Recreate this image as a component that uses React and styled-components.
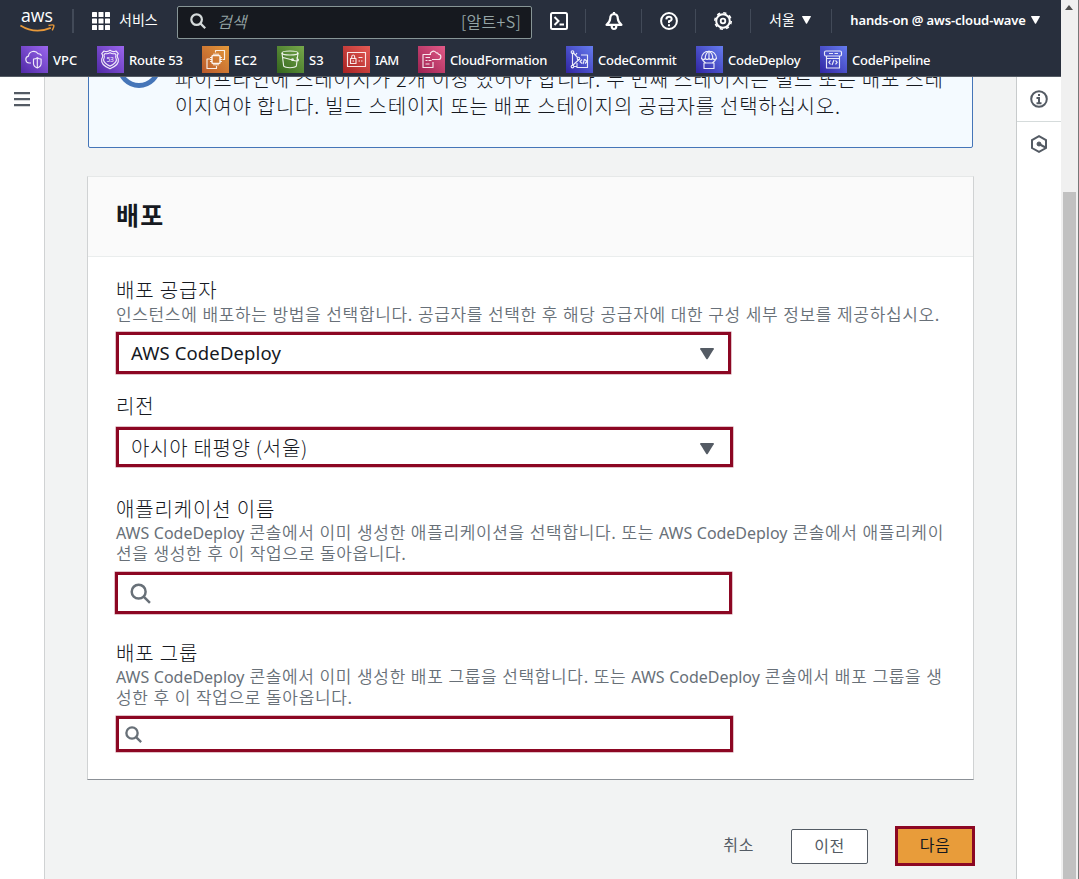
import React from "react";
import styled, { createGlobalStyle, css } from "styled-components";

const latin = `"Noto Sans", "Open Sans"`;
const korean = `"Noto Sans CJK KR"`;

const GlobalStyle = createGlobalStyle`
  * { box-sizing: border-box; }
  body { margin: 0; background: #f2f3f3; font-family: ${latin}, ${korean}, sans-serif; color: #16191f; overflow: hidden; }
  svg { display: block; flex: none; overflow: visible; }
`;

const Window = styled.div`
  display: flex;
  width: 1079px;
  height: 879px;
  overflow: hidden;
`;
const Page = styled.div`
  width: 1061px;
  height: 879px;
  display: flex;
  flex-direction: column;
`;
const Scrollbar = styled.div`
  width: 18px;
  background: #f0f0f0;
  border-right: 1px solid #777;
  display: flex;
  flex-direction: column;
  align-items: center;
`;
const ScrollArrow = styled.svg`
  margin: 5px 1px 0 0;
`;
const ScrollThumb = styled.div`
  width: 13px;
  flex: 1;
  margin-top: 182px;
  background: #c1c1c1;
`;

const Header = styled.header`
  height: 77px;
  flex: none;
  background: #282f3d;
  border-bottom: 1px solid #545b64;
  color: #fff;
`;
const TopBar = styled.div`
  height: 41px;
  display: flex;
  align-items: center;
  padding-left: 20px;
`;
const Divider = styled.i`
  width: ${(p) => p.$w || 1}px;
  height: 24px;
  background: #424a58;
  flex: none;
  margin-left: ${(p) => p.$gap}px;
`;
const Services = styled.div`
  display: flex;
  align-items: center;
  gap: 9px;
  margin-left: 18px;
  font: 400 14px/18px ${korean}, sans-serif;
  width: 85px;
  white-space: nowrap;
  span { padding-bottom: 3px; }
`;
const SearchBox = styled.div`
  width: 355px;
  height: 33px;
  margin: 3px 0 0;
  background: #16191f;
  border: 1px solid #879596;
  border-radius: 2px;
  display: flex;
  align-items: center;
  padding: 0 10px 0 12px;
  color: #95a5a6;
  font: 350 16px/29px ${korean}, sans-serif;
  > svg { margin-bottom: 2px; }
  > span, > em { padding-bottom: 2px; }
`;
const SearchHint = styled.em`
  margin-left: 11px;
  flex: 1;
`;
const Shortcut = styled.span`
  letter-spacing: 0.3px;
`;
const TopIcon = styled.span`
  width: 18px;
  margin-left: ${(p) => p.$gap}px;
  flex: none;
`;
const Menu = styled.span`
  display: flex;
  align-items: center;
  gap: ${(p) => p.$space || 7}px;
  margin-left: ${(p) => p.$gap}px;
  font: ${(p) => p.$weight || 400} ${(p) => p.$size || 14}px/18px ${latin}, ${korean}, sans-serif;
  letter-spacing: ${(p) => p.$ls || 0}px;
  padding-bottom: 1px;
  white-space: nowrap;
`;
const Favorites = styled.nav`
  height: 35px;
  display: flex;
  padding: 5px 0 0 21px;
`;
const Favorite = styled.a`
  display: flex;
  align-items: center;
  gap: 5px;
  width: ${(p) => p.$w}px;
  height: 27px;
  font: 500 13px/16px ${latin}, sans-serif;
  letter-spacing: ${(p) => p.$ls}px;
  white-space: nowrap;
`;

const Body = styled.div`
  flex: 1;
  display: flex;
  min-height: 0;
`;
const LeftRail = styled.aside`
  width: 45px;
  background: #fff;
  border-right: 1px solid #d0d2d3;
  padding: 15px 0 0 14px;
`;
const RightRail = styled.aside`
  width: 45px;
  background: #fff;
  border-left: 1px solid #c8cbcc;
`;
const RailButton = styled.div`
  height: ${(p) => (p.$line ? 45 : 43)}px;
  display: flex;
  justify-content: center;
  align-items: center;
  border-bottom: ${(p) => (p.$line ? "1px solid #d5dbdb" : "0")};
`;
const Main = styled.main`
  flex: 1;
  padding: 0 43px;
  display: flex;
  flex-direction: column;
  overflow: hidden;
`;
const Alert = styled.section`
  height: 148px;
  flex: none;
  margin-top: -77px;
  border: 1px solid #4575b8;
  border-radius: 2px;
  background: #f4faff;
  display: flex;
  padding: 43px 0 0 28px;
`;
const AlertText = styled.div`
  margin: 21px 0 0 14px;
  font: 300 20px/27px ${korean}, sans-serif;
  letter-spacing: 0.75px;
  white-space: nowrap;
`;
const Card = styled.section`
  margin: 28px 0 0 -1px;
  height: 604px;
  flex: none;
  width: 887px;
  background: #fff;
  border: 1px solid #d0d2d3;
  border-top-color: #e6e8e8;
  border-bottom-color: #8b9096;
`;
const CardHead = styled.h2`
  margin: 0;
  height: 80px;
  padding: 0 28px;
  background: #fafafa;
  border-bottom: 1px solid #eaeded;
  font: 700 25px/75px ${korean}, sans-serif;
  letter-spacing: 1.2px;
`;
const Form = styled.div`
  padding: 20px 0 0 28px;
`;
const Field = styled.div`
  height: ${(p) => p.$h}px;
`;
const Label = styled.div`
  font: 300 20px/26px ${korean}, sans-serif;
  letter-spacing: 0.86px;
  white-space: nowrap;
`;
const Description = styled.div`
  font: 350 17px/20.5px ${korean}, sans-serif;
  letter-spacing: 0.65px;
  word-spacing: 0.5px;
  color: #687078;
  white-space: nowrap;
  padding-top: ${(p) => p.$top || 0}px;
`;
const Latin = styled.span`
  font-family: ${latin}, sans-serif;
  font-weight: 400;
  font-size: ${(p) => p.$size}px;
  line-height: 1;
  letter-spacing: ${(p) => p.$ls}px;
`;
const controlText = css`
  font: 300 20px/33px ${korean}, sans-serif;
  letter-spacing: 0.7px;
`;
const Control = styled.div`
  ${controlText}
  width: ${(p) => p.$w}px;
  height: ${(p) => p.$h}px;
  margin: ${(p) => p.$top || 9}px 0 0 ${(p) => p.$left || 0}px;
  padding: ${(p) => p.$drop || 0}px ${(p) => p.$right || 16}px 0 ${(p) => p.$pad || 12}px;
  border: 3px solid #8c0723;
  box-shadow: 0 0 0 0.5px rgba(140, 7, 35, 0.5);
  display: flex;
  align-items: center;
  justify-content: space-between;
`;
const RegionName = styled.span`
  padding-bottom: 3px;
`;
const Actions = styled.div`
  display: flex;
  justify-content: flex-end;
  align-items: center;
  margin: 45px 0 0;
  height: 41px;
  font: 400 16px/30px ${korean}, sans-serif;
  letter-spacing: 0.6px;
  color: #545b64;
  width: 887px;
  > span { padding-bottom: 3px; }
`;
const Button = styled.button`
  width: 77px;
  height: 35px;
  margin: 1px 27px 0 37px;
  padding: 0 0 4px;
  border: 1px solid #545b64;
  border-radius: 2px;
  background: #fff;
  font: inherit;
  letter-spacing: inherit;
  color: inherit;
`;
const PrimaryButton = styled(Button)`
  width: 80px;
  height: 40px;
  margin: 0;
  border: 3px solid #8c0723;
  border-radius: 0;
  background: #e89c3a;
  color: #16191f;
`;

const Magnifier = ({ size, color, width = 2.2 }) => (
  <svg width={size} height={size} viewBox="0 0 16 16" fill="none" stroke={color} strokeWidth={width}>
    <circle cx="6.6" cy="6.6" r="5.3" />
    <path d="M10.4 10.4 15.2 15.2" />
  </svg>
);
const Caret = ({ w = 9, h = 8, color = "#fff" }) => (
  <svg width={w} height={h} viewBox="0 0 10 8" preserveAspectRatio="none">
    <path d="M.6 0h8.8q.8 0 .4.8L5.6 7.4q-.6.8-1.2 0L.2.8Q-.2 0 .6 0z" fill={color} />
  </svg>
);
const AwsLogo = () => (
  <svg width="36" height="24" viewBox="0 0 36 24">
    <text x="1" y="13.300" fontFamily="Open Sans, sans-serif" fontWeight="500" fontSize="19" textLength="32" lengthAdjust="spacingAndGlyphs" fill="#fff">aws</text>
    <path d="M.4 16.500Q15 25.500 30.8 18.900" fill="none" stroke="#e8993a" strokeWidth="1.700" />
    <path d="M28.500 16.500q4.500-1.200 5.200-.2t-1.500 5" fill="none" stroke="#e8993a" strokeWidth="1.500" />
  </svg>
);
const GridIcon = () => (
  <svg width="18" height="18" fill="#fff">
    {[0, 6.5, 13].map((y) => [0, 6.5, 13].map((x) => <rect key={`${x}-${y}`} x={x} y={y} width="5" height="5" rx=".6" />))}
  </svg>
);

const drawings = {
  vpc: <><path d="M10.500 18.500H8.600a3.500 3.500 0 0 1-.6-6.900 5.200 5.200 0 0 1 9.600-2.300 3.200 3.200 0 0 1 3.400 2" transform="translate(-.5 -1.500)" /><path d="M12.500 13q2.200 0 3.800-1.400 1.600 1.400 3.800 1.400v4.500q0 3-3.800 4.500-3.800-1.500-3.800-4.500zM16.300 12v9.800" /></>,
  route53: <><path d="M7 5q3 1.500 6-.7 3 2.200 6 .7l2.300 2.600q-2 2 0 5.400 1.200 5.800-8.300 9.800-9.500-4-8.300-9.800 2-3.400 0-5.400z" /><path d="M8 7.500q2.500.8 5-.8 2.500 1.600 5 .8l1 1.400q-1 2 .5 5-.5 3.600-6.500 6.200-6-2.600-6.500-6.200 1.500-3 .5-5z" /></>,
  ec2: <><rect x="10" y="9.500" width="8" height="8" rx="1" strokeWidth="1.500" /><path d="M12 7.500v2m2-2v2m2-2v2m-4 8v2m2-2v2m2-2v2M8 11.500h2m-2 2h2m-2 2h2m8-4h2m-2 2h2m-2 2h2M13.500 6.500v-2h9v9h-2M8 13H5v9.500h9.500v-2.500" /></>,
  s3: <><ellipse cx="13" cy="7" rx="8" ry="2" /><path d="M5 7l1.700 13.200c2 2 10.600 2 12.600 0L21 7M6 11.500l9.500 2.500q5.500 2 6-.2l-2-2.300" /><circle cx="15.500" cy="13.700" r=".8" /></>,
  iam: <><rect x="4.500" y="6.500" width="18" height="14" /><rect x="7.500" y="12.500" width="5.500" height="5" /><path d="M8.700 12.500V11q0-2 1.500-2t1.500 2v1.500M15.500 11.500h4m-4 3.500h1.500m1 0h1.500M10.200 14.300v1.500" /></>,
  formation: <><path d="M13 8.500H5v13h10V16M7.500 11.500H12m-4.500 3h2m1 0h3m-6 3.500h4" /><path d="M14 13.500h6a2.600 2.600 0 0 0 .5-5.200q-.5-1.700-2.100-1.300Q16.500 4 13.500 6q-1.500 1-1.300 2.500" /></>,
  commit: <><path d="M6.500 7v12M7.500 7l4 4.500M11 7l-1.500 2M6.500 19.500l6.500-6" /><circle cx="6.500" cy="6" r="1.300" /><circle cx="6.500" cy="20.500" r="1.300" /><circle cx="12.500" cy="12.500" r="1.300" /><path d="M15 9h6.500v12.500H11V17M16 13.500l-2 2 2 2m3-4 2 2-2 2m-.5-4.500-1.500 5M8 20.500h3" /></>,
  deploy: <><path d="M5.500 12.500a7.500 7.500 0 0 1 15 0q-1.900 2-3.800 0-1.900 2-3.700 0-1.900 2-3.700 0-1.900 2-3.800 0zM9.300 12q0-4.500 3.700-7 3.700 2.500 3.700 7M13 5v7.500M6.500 14l3 3m10-3-3 3" /><rect x="8" y="17" width="10" height="5.500" /></>,
  pipeline: <><rect x="4.500" y="5" width="17" height="5" rx="1.500" /><path d="M6.500 10v12h13V10M6.500 12.500h13M9 7.500h4m1.500 0H18M10.500 14.500l-1.700 1.900 1.700 1.900m5-3.800 1.700 1.900-1.700 1.900m-1.500-4.300-2 5" /></>,
};
const ServiceIcon = ({ id, from, to }) => (
  <svg width="27" height="27" viewBox="0 0 27 27">
    <defs>
      <linearGradient id={id} x1="0" y1="1" x2="1" y2="0">
        <stop stopColor={from} />
        <stop offset="1" stopColor={to} />
      </linearGradient>
    </defs>
    <rect width="27" height="27" fill={`url(#${id})`} />
    <g fill="none" stroke="#fff" strokeOpacity=".88" strokeWidth="1.150" strokeLinejoin="round">{drawings[id]}</g>
    {id === "route53" && <text x="13.100" y="15.800" textAnchor="middle" fontFamily="Open Sans, sans-serif" fontSize="6.500" letterSpacing="0" fill="#fff">53</text>}
  </svg>
);

const favorites = [
  ["vpc", "VPC", 76, "#5029a6", "#9b66ee", 0],
  ["route53", "Route 53", 105, "#5029a6", "#9b66ee", -0.15],
  ["ec2", "EC2", 75, "#bb5a2c", "#e3983a", 0],
  ["s3", "S3", 66, "#33651d", "#77a94b", 0],
  ["iam", "IAM", 75, "#a82222", "#e55b55", -0.4],
  ["formation", "CloudFormation", 148, "#9c2150", "#e25a88", -0.25],
  ["commit", "CodeCommit", 130, "#3024a2", "#657cf0", -0.25],
  ["deploy", "CodeDeploy", 124, "#3024a2", "#657cf0", -0.25],
  ["pipeline", "CodePipeline", 120, "#3024a2", "#657cf0", -0.25],
];

const Cd = () => <Latin $size={16} $ls={-0.02}>AWS CodeDeploy</Latin>;

export default function App() {
  return (
    <Window>
      <GlobalStyle />
      <Page>
        <Header>
          <TopBar>
            <AwsLogo />
            <Divider $gap={16} $w={2} />
            <Services><GridIcon /><span>서비스</span></Services>
            <SearchBox>
              <Magnifier size={16} color="#d5dbdb" />
              <SearchHint>검색</SearchHint>
              <Shortcut>[알트+S]</Shortcut>
            </SearchBox>
            <TopIcon $gap={18}>
              <svg width="18" height="18" fill="none" stroke="#fff" strokeWidth="2"><rect x="1" y="1" width="16" height="16" rx="1.500" /><path d="M4.500 5 8.500 9l-4 4M9.500 12.500h4.500" /></svg>
            </TopIcon>
            <Divider $gap={17} />
            <TopIcon $gap={19}>
              <svg width="18" height="18" fill="none" stroke="#fff" strokeWidth="2.200" strokeLinejoin="round"><path d="M9 2Q5.200 2.300 5.200 6.500 5 10 1.500 12.800h15Q13 10 12.800 6.500 12.800 2.300 9 2zM9 0v2M6.700 14q0 3 2.300 3t2.300-3" /></svg>
            </TopIcon>
            <Divider $gap={18} />
            <TopIcon $gap={17.5}>
              <svg width="18" height="18" fill="none" stroke="#fff" strokeWidth="2"><circle cx="9" cy="9" r="7.900" /><path d="M6.300 7.300Q6.500 4.800 9 4.800t2.700 2.200Q11.700 8.500 9 9.300V11M9 12.300v1.900" /></svg>
            </TopIcon>
            <Divider $gap={17} />
            <TopIcon $gap={18.5}>
              <svg width="18" height="18" fill="none" stroke="#fff"><circle cx="9" cy="9" r="6.800" strokeWidth="2" /><circle cx="9" cy="9" r="8.200" strokeWidth="1.600" strokeDasharray="3.220 3.220" /><circle cx="9" cy="9" r="2.300" strokeWidth="1.800" /></svg>
            </TopIcon>
            <Divider $gap={18} />
            <Menu $gap={18}>서울<Caret /></Menu>
            <Divider $gap={20} />
            <Menu $gap={18.5} $weight={600} $size={13} $ls={-0.12} $space={5}>hands-on @ aws-cloud-wave<Caret /></Menu>
          </TopBar>
          <Favorites>
            {favorites.map(([id, name, w, from, to, ls]) => (
              <Favorite key={id} $w={w} $ls={ls}><ServiceIcon id={id} from={from} to={to} />{name}</Favorite>
            ))}
          </Favorites>
        </Header>
        <Body>
          <LeftRail>
            <svg width="16" height="14" fill="#545b64"><path d="M0 0h16v2.200H0zm0 6h16v2.200H0zm0 6h16v2.200H0z" /></svg>
          </LeftRail>
          <Main>
            <Alert>
              <svg width="44" height="44" fill="none" stroke="#4575b8" strokeWidth="4.800"><circle cx="22" cy="22" r="19.500" /></svg>
              <AlertText>
                파이프라인에 스테이지가 2개 이상 있어야 합니다. 두 번째 스테이지는 빌드 또는 배포 스테<br />
                이지여야 합니다. 빌드 스테이지 또는 배포 스테이지의 공급자를 선택하십시오.
              </AlertText>
            </Alert>
            <Card>
              <CardHead>배포</CardHead>
              <Form>
                <Field $h={116}>
                  <Label>배포 공급자</Label>
                  <Description $top={1}>인스턴스에 배포하는 방법을 선택합니다. 공급자를 선택한 후 해당 공급자에 대한 구성 세부 정보를 제공하십시오.</Description>
                  <Control $w={615} $h={42} $top={7.5} $right={14} $drop={1}><Latin $size={18.5} $ls={0.12}>AWS CodeDeploy</Latin><Caret w={14} h={11.5} color="#545b64" /></Control>
                </Field>
                <Field $h={103}>
                  <Label>리전</Label>
                  <Control $w={617} $h={40} $top={8} $drop={3}><RegionName>아시아 태평양 (서울)</RegionName><Caret w={14} h={11.5} color="#545b64" /></Control>
                </Field>
                <Field $h={144}>
                  <Label>애플리케이션 이름</Label>
                  <Description><Cd /> 콘솔에서 이미 생성한 애플리케이션을 선택합니다. 또는 <Cd /> 콘솔에서 애플리케이<br />션을 생성한 후 이 작업으로 돌아옵니다.</Description>
                  <Control $w={617} $h={42} $left={-1}><Magnifier size={21} color="#687078" width={1.9} /></Control>
                </Field>
                <Field $h={110}>
                  <Label>배포 그룹</Label>
                  <Description><Cd /> 콘솔에서 이미 생성한 배포 그룹을 선택합니다. 또는 <Cd /> 콘솔에서 배포 그룹을 생<br />성한 후 이 작업으로 돌아옵니다.</Description>
                  <Control $w={617} $h={36} $pad={6}><Magnifier size={17} color="#687078" /></Control>
                </Field>
              </Form>
            </Card>
            <Actions>
              <span>취소</span>
              <Button>이전</Button>
              <PrimaryButton>다음</PrimaryButton>
            </Actions>
          </Main>
          <RightRail>
            <RailButton $line>
              <svg width="18" height="18" fill="none" stroke="#545b64" strokeWidth="2"><circle cx="9" cy="9" r="7.800" /><path d="M9 4v2M6.500 8H9v5M6.500 13.200h5" /></svg>
            </RailButton>
            <RailButton>
              <svg width="18" height="18" fill="none" stroke="#545b64" strokeWidth="2"><path d="M9 1.200 16 5v8l-7 3.900L2 13V5z" /><circle cx="9" cy="9" r="2" fill="#545b64" strokeWidth="1" /><path d="m9 9 6.500 3.500" /></svg>
            </RailButton>
          </RightRail>
        </Body>
      </Page>
      <Scrollbar>
        <ScrollArrow width="8" height="5"><path d="M4 0 8 5H0z" fill="#505050" /></ScrollArrow>
        <ScrollThumb />
      </Scrollbar>
    </Window>
  );
}
